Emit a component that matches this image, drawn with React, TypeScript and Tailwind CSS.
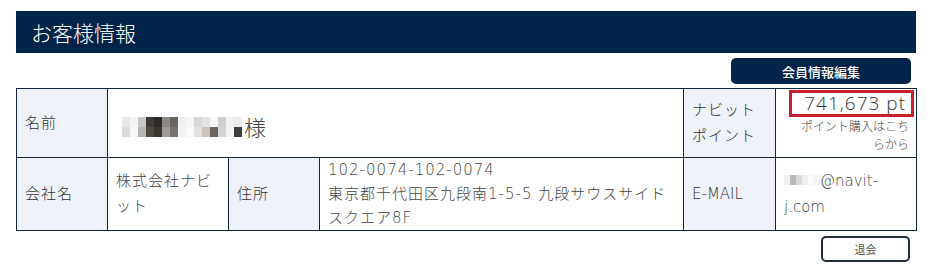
import React from "react";

const font = { fontFamily: '"DejaVu Sans", "Noto Sans CJK JP", sans-serif' };
const jp = { fontFamily: '"Noto Sans CJK JP", sans-serif' };

// pixelated (mosaic) placeholder for masked personal data
function Mosaic({ top, bottom, w }: { top: string[]; bottom: string[]; w: number }) {
  return (
    <span className="inline-flex flex-col align-middle">
      {[top, bottom].map((row, r) => (
        <span key={r} className="flex">
          {row.map((c, i) => (
            <span key={i} className="inline-block h-[10px]" style={{ background: c, width: w }} />
          ))}
        </span>
      ))}
    </span>
  );
}

export default function App() {
  const label = "bg-[#eff2f9] border border-[#10243c] px-2 text-[15px] tracking-[1px] text-[#333] font-light align-middle";
  const cell = "bg-white border border-[#10243c] px-2 text-[15px] tracking-[1px] text-[#444] font-light align-middle";
  return (
    <div className="w-[931px] h-[267px] bg-white" style={font}>
      <div className="ml-4 w-[900px] pt-[11px]">
        <div className="h-[42px] bg-[#02244a] flex items-center px-[15px]">
          <h1 className="text-white text-[21px] leading-none font-light" style={jp}>
            お客様情報
          </h1>
        </div>
        <div className="flex justify-end mt-[5px] pr-[5px]">
          <button
            className="w-[180px] h-[26px] rounded-[5px] bg-[#02244a] text-white text-[13px] font-medium leading-none"
            style={jp}
          >
            会員情報編集
          </button>
        </div>
        <table className="mt-[4px] w-[900px] border-collapse table-fixed">
          <colgroup>
            <col className="w-[91px]" />
            <col className="w-[121px]" />
            <col className="w-[91px]" />
            <col className="w-[364px]" />
            <col className="w-[92px]" />
            <col className="w-[141px]" />
          </colgroup>
          <tbody>
            <tr className="h-[69px]">
              <td className={label}>名前</td>
              <td className={cell + " text-[22px] text-[#333] tracking-normal"} colSpan={3}>
                <span className="inline-flex items-center ml-[6px]">
                  <Mosaic
                    w={8}
                    top={["#e8e8e8", "#f4f4f4", "#c8c8c8", "#3e3a36", "#2f2a27", "#8c8884", "#6a6561", "#eef0f2", "#f6f6f6", "#d8d8d8", "#e4e4e4", "#f8f8f8", "#cfcfcf", "#f2f2f2", "#ececec"]}
                    bottom={["#dcdcdc", "#f7f7f7", "#b5b5b5", "#50493f", "#3a342f", "#9f9b97", "#78726e", "#f1f3f6", "#fafafa", "#e2e2e2", "#c9c4be", "#6b6660", "#d6d6d6", "#f5f5f5", "#3d3d3d"]}
                  />
                  <span className="ml-[2px]" style={jp}>様</span>
                </span>
              </td>
              <td className={label + " leading-[26px]"}>
                ナビット<br />ポイント
              </td>
              <td className="bg-white border border-[#10243c] p-0 align-top">
                <div className="flex flex-col items-end">
                  <div
                    className="mt-[1px] mr-[2px] w-[125px] h-[27px] border-[3px] border-[#c8202f] flex items-center justify-end pr-[5px] text-[19px] tracking-[1px] text-[#333] font-light leading-none"
                    style={{ fontFamily: '"Open Sans", "Liberation Sans", sans-serif' }}
                  >
                    741,673 pt
                  </div>
                  <div className="text-right text-[12px] leading-[18px] text-[#444] font-light pr-[7px] pl-[18px] mt-[1px]">
                    ポイント購入はこちらから
                  </div>
                </div>
              </td>
            </tr>
            <tr className="h-[73px]">
              <td className={label}>会社名</td>
              <td className={cell + " leading-[25px]"}>株式会社ナビット</td>
              <td className={label}>住所</td>
              <td className={cell + " leading-[24px] py-0"}>
                102-0074-102-0074
                <br />
                東京都千代田区九段南1-5-5 九段サウスサイドスクエア8F
              </td>
              <td className={label + " tracking-normal"}>E-MAIL</td>
              <td className={cell + " leading-[26px] tracking-normal"}>
                <span className="inline-flex align-middle mb-[3px]">
                  {["#eeeeee", "#b9b9b9", "#d9d9d9", "#efefef", "#fafafa", "#f3f3f3"].map((c, i) => (
                    <span key={i} className="inline-block w-[6px] h-[10px]" style={{ background: c }} />
                  ))}
                </span>
                @navit-j.com
              </td>
            </tr>
          </tbody>
        </table>
        <div className="flex justify-end mt-[5px] pr-[6px]">
          <button
            className="w-[89px] h-[26px] rounded-[5px] border-2 border-[#1f2d3d] bg-white text-[11px] text-[#555] leading-none"
            style={jp}
          >
            退会
          </button>
        </div>
      </div>
    </div>
  );
}
